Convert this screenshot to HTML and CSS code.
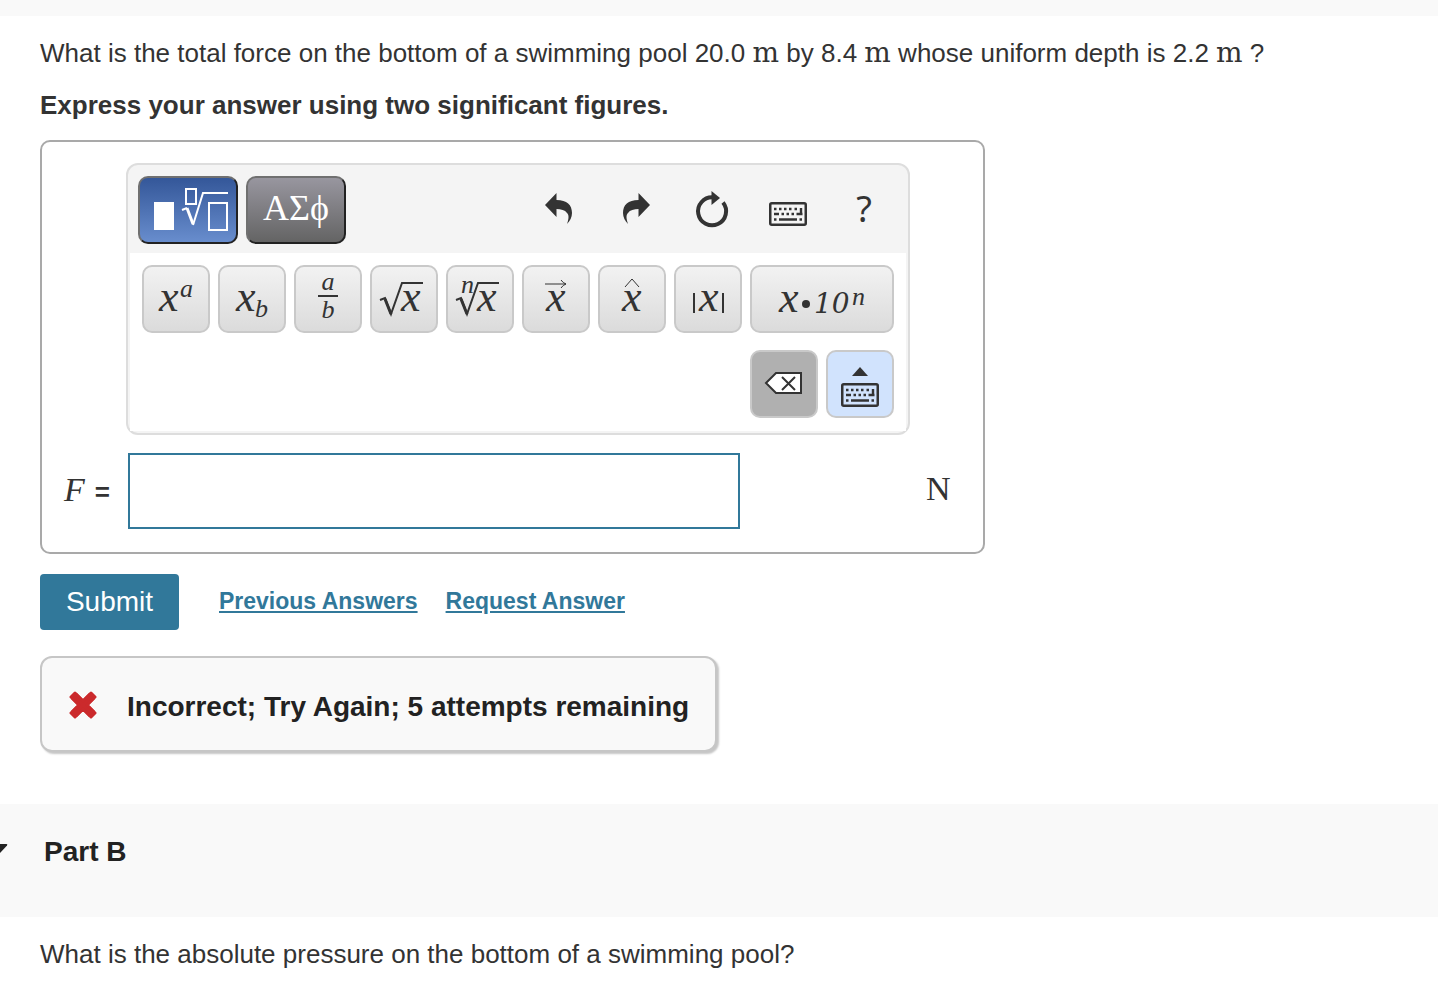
FILE: index.html
```
<!DOCTYPE html>
<html lang="en">
  <head>
    <meta charset="UTF-8" />
    <meta name="viewport" content="width=device-width, initial-scale=1.0" />
    <title>Pressure Problem</title>
    <link rel="stylesheet" href="styles.css">
  </head>
  <body>
    <svg class="defs" width="0" height="0" aria-hidden="true">
      <symbol id="keyboard" viewBox="0 0 40 40">
        <rect x="2.25" y="13.25" width="35.5" height="21.5" rx="1.5" fill="none" stroke="#333" stroke-width="2.5" />
        <path d="M6 19h2.5M11 19h2.5M16 19h2.5M21 19h2.5M26.5 19h2.5M6 24h5M13.5 24h2.5M18.5 24h2.5M23.5 24h2.5M28.5 24h6M33 18v7M6 29.5h2.5M11 29.5h18M31.5 29.5h2.5" fill="none" stroke="#333" stroke-width="2.4" />
      </symbol>
      <symbol id="undo" viewBox="0 0 40 40">
        <path d="M5 15 16.5 3V10C27 10 32 15 32 23C32 27 30 31 27 34C29 28 29 25 27 23C25 20 21 19 16.5 19V27Z" fill="#333" />
      </symbol>
    </svg>

    <div class="top-band"></div>

    <main>
      <section class="question">
        <p>What is the total force on the bottom of a swimming pool 20.0 <span class="unit">m</span> by 8.4 <span class="unit">m</span> whose uniform depth is 2.2 <span class="unit">m</span> ?</p>
        <p class="instructions">Express your answer using two significant figures.</p>

        <div class="answer-box">
          <div class="editor">
            <div class="toolbar">
              <button type="button" class="mode mode-active" aria-label="Templates">
                <svg width="96" height="64" viewBox="0 0 96 64" fill="none" stroke="#fff" stroke-width="2">
                  <rect x="14" y="24" width="20" height="28" fill="#fff" stroke="none" />
                  <rect x="46" y="11" width="10" height="15" />
                  <path d="M42 32l5-2" />
                  <path d="M47 30l6 16" stroke-width="3" />
                  <path d="M53 47l10-32h25" />
                  <rect x="69" y="25" width="18" height="27" />
                </svg>
              </button>
              <button type="button" class="mode mode-greek">ΑΣϕ</button>
              <div class="actions">
                <button type="button" class="action" aria-label="Undo">
                  <svg width="40" height="40"><use href="#undo" /></svg>
                </button>
                <button type="button" class="action" aria-label="Redo">
                  <svg width="40" height="40"><use href="#undo" transform="translate(39 0) scale(-1 1)" /></svg>
                </button>
                <button type="button" class="action" aria-label="Reset">
                  <svg width="40" height="40" viewBox="0 0 40 40">
                    <path d="M21 7.3A14 14 0 1 0 31 12.5" fill="none" stroke="#333" stroke-width="4" />
                    <path d="M19.5 1 28 8 19.5 15Z" fill="#333" />
                  </svg>
                </button>
                <button type="button" class="action" aria-label="Keyboard shortcuts">
                  <svg width="40" height="40"><use href="#keyboard" /></svg>
                </button>
                <button type="button" class="action help">?</button>
              </div>
            </div>

            <div class="keypad">
              <button type="button" class="key" aria-label="Superscript">
                <svg viewBox="0 0 64 64"><text x="15" y="44">x</text><text class="small" x="36" y="30">a</text></svg>
              </button>
              <button type="button" class="key" aria-label="Subscript">
                <svg viewBox="0 0 64 64"><text x="16" y="44">x</text><text class="small" x="35" y="50">b</text></svg>
              </button>
              <button type="button" class="key" aria-label="Fraction">
                <svg viewBox="0 0 64 64">
                  <text class="small middle" x="32" y="23">a</text>
                  <path d="M22 29h20" />
                  <text class="small middle" x="32" y="51">b</text>
                </svg>
              </button>
              <button type="button" class="key" aria-label="Square root">
                <svg viewBox="0 0 64 64"><path d="M8 33l5-2 6 16 11-31h21" /><path class="thick" d="M13 32l6 15" /><text x="29" y="44">x</text></svg>
              </button>
              <button type="button" class="key" aria-label="Nth root">
                <svg viewBox="0 0 64 64"><path d="M8 33l5-2 6 16 11-31h21" /><path class="thick" d="M13 32l6 15" /><text class="small" x="13" y="26">n</text><text x="29" y="44">x</text></svg>
              </button>
              <button type="button" class="key" aria-label="Vector">
                <svg viewBox="0 0 64 64"><path class="thin" d="M21 17h21M37 13q2 3 5 4q-3 1-5 4" /><text x="22" y="44">x</text></svg>
              </button>
              <button type="button" class="key" aria-label="Unit vector">
                <svg viewBox="0 0 64 64"><path class="thin" d="M25 20l7-8 7 8" /><text x="22" y="44">x</text></svg>
              </button>
              <button type="button" class="key" aria-label="Absolute value">
                <svg viewBox="0 0 64 64"><path d="M18 26v20M47 26v20" /><text x="23" y="44">x</text></svg>
              </button>
              <button type="button" class="key key-wide" aria-label="Scientific notation">
                <svg viewBox="0 0 140 64"><text x="27" y="45">x</text><circle cx="54" cy="37" r="4" /><text class="digits" x="62" y="46">10</text><text class="small" x="100" y="38">n</text></svg>
              </button>
              <button type="button" class="key key-delete" aria-label="Delete">
                <svg viewBox="0 0 64 64"><path class="filled" d="M14 31l10-10h25v20H24Z" /><path d="M30 25l13 13M43 25L30 38" /></svg>
              </button>
              <button type="button" class="key key-toggle" aria-label="Toggle keypad">
                <svg viewBox="0 0 64 64"><path class="solid" d="M32 15l8 9H24Z" /><use href="#keyboard" x="12" y="19" width="40" height="40" /></svg>
              </button>
            </div>
          </div>

          <label class="answer-label" for="answer"><i>F</i> <span class="equals">=</span></label>
          <div class="answer-field">
            <input type="text" id="answer" class="answer-input" autocomplete="off" />
          </div>
          <span class="answer-unit">N</span>
        </div>

        <div class="submit-row">
          <button type="button" class="submit">Submit</button>
          <a href="#previous">Previous Answers</a>
          <a href="#request">Request Answer</a>
        </div>

        <div class="feedback">
          <svg width="28" height="28" viewBox="0 0 28 28" aria-hidden="true">
            <path d="M5 5 23 23M23 5 5 23" fill="none" stroke="#cb2a2c" stroke-width="8.5" />
            <path d="M6 2 14 10 22 2 26 6 18 14 26 22 22 26 14 18 6 26 2 22 10 14 2 6Z" fill="#cb2a2c" stroke="#cb2a2c" stroke-width="3" stroke-linejoin="round" />
          </svg>
          <span class="feedback-text">Incorrect; Try Again; 5 attempts remaining</span>
        </div>
      </section>

      <header class="part-header">
        <svg class="caret" width="8" height="16" viewBox="0 0 8 16" aria-hidden="true">
          <path d="M0 0H6.5Q8 0 7 1.5L0 9Z" fill="#222" />
        </svg>
        <h2>Part B</h2>
      </header>

      <section class="question">
        <p>What is the absolute pressure on the bottom of a swimming pool?</p>
      </section>
    </main>
  </body>
</html>
```

FILE: styles.css
```
* {
  box-sizing: border-box;
}
body {
  margin: 0;
  background-color: #fff;
  color: #333;
  font-family: "Liberation Sans", Arial, sans-serif;
  font-size: 26px;
  line-height: 32px;
}
button {
  margin: 0;
  padding: 0;
  font-family: inherit;
  cursor: pointer;
}
svg {
  display: block;
}
p {
  margin: 0;
}
.defs {
  position: absolute;
}
.top-band {
  height: 16px;
  background-color: #f9f9f9;
}
.question {
  padding: 21px 40px 0;
}
.unit {
  font-family: "DejaVu Serif", serif;
  font-size: 28px;
  line-height: 1px;
}
.instructions {
  margin-top: 20px;
  font-weight: bold;
}

/* answer area */
.answer-box {
  display: grid;
  grid-template-columns: 62px auto 1fr;
  gap: 18px 0;
  align-items: center;
  max-width: 945px;
  margin-top: 19px;
  padding: 21px 22px 23px;
  border: 2px solid #a9a9a9;
  border-radius: 10px;
}
.editor {
  grid-column: 2;
  padding: 0 2px 2px;
  background-color: #f4f4f4;
  border: 2px solid #ddd;
  border-radius: 12px;
}
.toolbar {
  display: flex;
  align-items: center;
  gap: 8px;
  height: 88px;
  padding: 2px 12px 0 8px;
}
.mode {
  display: flex;
  justify-content: center;
  align-items: center;
  width: 100px;
  height: 68px;
  color: #fff;
  background: linear-gradient(#98969f, #646464);
  border: 2px solid;
  border-color: #707070 #222 #222 #707070;
  border-radius: 10px;
}
.mode-active {
  background: linear-gradient(#345799, #688dcd);
}
.mode-greek {
  padding-bottom: 4px;
  font-family: "Liberation Serif", serif;
  font-size: 36px;
  line-height: 32px;
}
.actions {
  display: flex;
  gap: 16px;
  margin-left: auto;
}
.action {
  display: flex;
  justify-content: center;
  align-items: center;
  width: 60px;
  height: 60px;
  color: #333;
  background: none;
  border: none;
}
.help {
  padding-bottom: 4px;
  font-family: "Noto Sans", sans-serif;
  font-size: 36px;
}
.keypad {
  display: grid;
  grid-template-columns: repeat(10, 68px);
  gap: 17px 8px;
  padding: 12px 12px 13px;
  background-color: #fff;
}
.key {
  height: 68px;
  background: linear-gradient(#f2f2f2, #dbdbdb);
  border: 2px solid #c9c9c9;
  border-radius: 10px;
}
.key svg {
  width: 100%;
  height: 64px;
  fill: #333;
}
.key text {
  font-family: "Liberation Serif", serif;
  font-size: 44px;
  font-style: italic;
}
.key .small {
  font-size: 26px;
}
.key .middle {
  text-anchor: middle;
}
.key .digits {
  font-family: "DejaVu Serif", serif;
  font-size: 28px;
}
.key path {
  fill: none;
  stroke: #333;
  stroke-width: 2px;
}
.key .thin {
  stroke-width: 1px;
}
.key .thick {
  stroke-width: 3px;
}
.key .filled {
  fill: #fff;
}
.key .solid {
  fill: #333;
  stroke: none;
}
.key-wide {
  grid-column: span 2;
}
.key-delete {
  grid-column: 9;
  background: #b0b0b0;
}
.key-toggle {
  background: #d1e3fd;
}
.answer-label {
  display: flex;
  grid-column: 1;
  align-items: baseline;
  gap: 10px;
  font-family: "Liberation Serif", serif;
  font-size: 34px;
}
.equals {
  font-family: "Liberation Sans", Arial, sans-serif;
  font-size: 26px;
  font-weight: bold;
}
.answer-field {
  padding: 0 2px;
}
.answer-input {
  display: block;
  width: 612px;
  height: 76px;
  padding: 0 12px;
  color: #333;
  font-family: "Liberation Serif", serif;
  font-size: 34px;
  border: 2px solid #31789a;
}
.answer-unit {
  padding: 0 0 4px 16px;
  font-family: "Liberation Serif", serif;
  font-size: 34px;
}

/* submit and feedback */
.submit-row {
  display: flex;
  align-items: center;
  gap: 28px;
  margin-top: 20px;
}
.submit {
  width: 139px;
  height: 56px;
  margin-right: 12px;
  color: #fff;
  font-size: 28px;
  background-color: #31789a;
  border: none;
  border-radius: 4px;
}
.submit-row a {
  padding-bottom: 2px;
  color: #31789a;
  font-size: 23px;
  font-weight: bold;
}
.feedback {
  display: flex;
  align-items: center;
  gap: 30px;
  width: fit-content;
  margin-top: 26px;
  padding: 29px 26px 27px 27px;
  color: #222;
  font-size: 28px;
  font-weight: bold;
  background-color: #f9f9f9;
  border: 2px solid #c6c6c6;
  border-radius: 12px;
  box-shadow: 2px 2px 2px #c6c6c6;
}
.feedback-text {
  padding-top: 4px;
}

/* part header */
.part-header {
  display: flex;
  align-items: center;
  gap: 36px;
  height: 113px;
  margin-top: 52px;
  padding-bottom: 18px;
  background-color: #f9f9f9;
}
h2 {
  margin: 0;
  color: #222;
  font-size: 28px;
}
```
